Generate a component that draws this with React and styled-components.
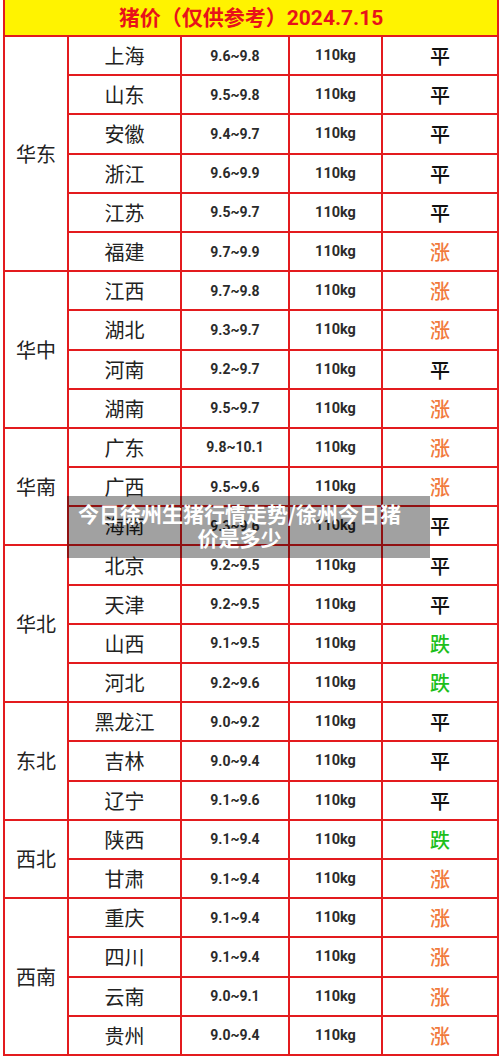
import React from "react"
import styled, { createGlobalStyle } from "styled-components"

const GlobalStyle = createGlobalStyle`
  html, body {
    margin: 0;
    padding: 0;
    background: #ffffff;
  }
  body {
    font-family: "Noto Sans CJK SC", "Noto Sans", sans-serif;
  }
`

const regions = [
  {
    name: "华东",
    rows: [
      ["上海", "9.6~9.8", "平"],
      ["山东", "9.5~9.8", "平"],
      ["安徽", "9.4~9.7", "平"],
      ["浙江", "9.6~9.9", "平"],
      ["江苏", "9.5~9.7", "平"],
      ["福建", "9.7~9.9", "涨"]
    ]
  },
  {
    name: "华中",
    rows: [
      ["江西", "9.7~9.8", "涨"],
      ["湖北", "9.3~9.7", "涨"],
      ["河南", "9.2~9.7", "平"],
      ["湖南", "9.5~9.7", "涨"]
    ]
  },
  {
    name: "华南",
    rows: [
      ["广东", "9.8~10.1", "涨"],
      ["广西", "9.5~9.6", "涨"],
      ["海南", "9.3~9.6", "平"]
    ]
  },
  {
    name: "华北",
    rows: [
      ["北京", "9.2~9.5", "平"],
      ["天津", "9.2~9.5", "平"],
      ["山西", "9.1~9.5", "跌"],
      ["河北", "9.2~9.6", "跌"]
    ]
  },
  {
    name: "东北",
    rows: [
      ["黑龙江", "9.0~9.2", "平"],
      ["吉林", "9.0~9.4", "平"],
      ["辽宁", "9.1~9.6", "平"]
    ]
  },
  {
    name: "西北",
    rows: [
      ["陕西", "9.1~9.4", "跌"],
      ["甘肃", "9.1~9.4", "涨"]
    ]
  },
  {
    name: "西南",
    rows: [
      ["重庆", "9.1~9.4", "涨"],
      ["四川", "9.1~9.4", "涨"],
      ["云南", "9.0~9.1", "涨"],
      ["贵州", "9.0~9.4", "涨"]
    ]
  }
]

const trendColor = {
  平: "#111111",
  涨: "#f17a3c",
  跌: "#1cbf1c"
}

const Page = styled.div`
  position: relative;
  width: 500px;
  padding-left: 3px;
  box-sizing: border-box;
`

const Table = styled.table`
  width: 494px;
  margin-top: -2px;
  border-collapse: collapse;
  table-layout: fixed;

  td, th {
    border: 2px solid #e31b1e;
    padding: 0;
    text-align: center;
    vertical-align: middle;
  }
`

const HeadRow = styled.tr`
  height: 37px;
`

const HeadCell = styled.th`
  background: #fff300;
  color: #e8121a;
  font-family: "Noto Sans CJK SC", sans-serif;
  font-size: 21px;
  font-weight: 700;
  line-height: 1;

  span {
    font-family: "Roboto", "Noto Sans CJK SC", sans-serif;
  }
`

const Row = styled.tr`
  height: 39.2px;
`

const RegionCell = styled.td`
  font-size: 20px;
  color: #222;
  font-family: "Noto Sans CJK SC", sans-serif;
`

const CityCell = styled.td`
  font-size: 20px;
  color: #222;
  font-family: "Noto Sans CJK SC", sans-serif;
`

const NumCell = styled.td`
  font-family: "Roboto", "Noto Sans CJK SC", sans-serif;
  font-weight: 700;
  font-size: ${p => p.$size}px;
  color: #2b2b2b;
`

const TrendCell = styled.td`
  font-size: 20px;
  font-weight: 500;
  color: ${p => p.$color};
  font-family: "Noto Sans CJK SC", sans-serif;
`

const Banner = styled.div`
  position: absolute;
  left: 67px;
  top: 498px;
  width: 363px;
  height: 62px;
  box-sizing: border-box;
  padding: 5px 28px 0 10px;
  background: rgba(0, 0, 0, 0.37);
  color: #ffffff;
  font-family: "Noto Sans CJK SC", sans-serif;
  font-weight: 700;
  font-size: 21px;
  line-height: 24px;
  text-align: center;
`

export default function App() {
  return (
    <>
      <GlobalStyle />
      <Page>
        <Table>
          <colgroup>
            <col style={{ width: 64 }} />
            <col style={{ width: 113 }} />
            <col style={{ width: 108 }} />
            <col style={{ width: 93 }} />
            <col style={{ width: 116 }} />
          </colgroup>
          <thead>
            <HeadRow>
              <HeadCell colSpan={5}>
                猪价（仅供参考）<span>2024.7.15</span>
              </HeadCell>
            </HeadRow>
          </thead>
          <tbody>
            {regions.map(region =>
              region.rows.map(([city, price, trend], i) => (
                <Row key={region.name + city}>
                  {i === 0 && (
                    <RegionCell rowSpan={region.rows.length}>{region.name}</RegionCell>
                  )}
                  <CityCell>{city}</CityCell>
                  <NumCell $size={14}>{price}</NumCell>
                  <NumCell $size={14.5}>110kg</NumCell>
                  <TrendCell $color={trendColor[trend]}>{trend}</TrendCell>
                </Row>
              ))
            )}
          </tbody>
        </Table>
        <Banner>今日徐州生猪行情走势/徐州今日猪价是多少</Banner>
      </Page>
    </>
  )
}
